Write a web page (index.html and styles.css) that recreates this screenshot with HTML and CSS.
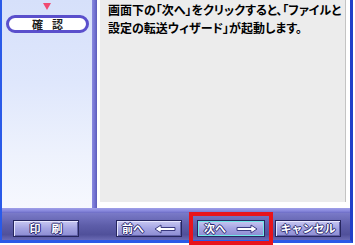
FILE: index.html
```html
<!DOCTYPE html>
<html lang="ja">
<head>
<meta charset="utf-8">
<link rel="stylesheet" href="styles.css">
</head>
<body>
<div class="window">
  <div class="main">
    <div class="sidebar">
      <div class="tri"></div>
      <div class="pill"><span>確</span><span>認</span></div>
    </div>
    <div class="vbar"></div>
    <div class="content-wrap">
      <div class="content">
        <p class="msg">画面下の「次へ」をクリックすると、「ファイルと<br>設定の転送ウィザード」が起動します。</p>
      </div>
    </div>
  </div>
  <div class="hbar"></div>
  <div class="toolbar">
    <div class="btn btn-print"><span class="lbl">印　刷</span></div>
    <div class="btn btn-prev"><span class="lbl">前へ</span>
      <svg class="arrow" width="22" height="10" viewBox="0 0 22 10"><path d="M1 5 L7 1 L7 3.5 L21 3.5 L21 6.5 L7 6.5 L7 9 Z" fill="#fff" stroke="#3a3a80" stroke-width="1"/></svg>
    </div>
    <div class="btn btn-next"><span class="lbl">次へ</span>
      <svg class="arrow" width="22" height="10" viewBox="0 0 22 10"><path d="M21 5 L15 1 L15 3.5 L1 3.5 L1 6.5 L15 6.5 L15 9 Z" fill="#fff" stroke="#3a3a80" stroke-width="1"/></svg>
    </div>
    <div class="btn btn-cancel"><span class="lbl">キャンセル</span></div>
  </div>
  <div class="highlight"></div>
</div>
</body>
</html>
```

FILE: styles.css
```css
html, body {
  margin: 0;
  padding: 0;
  background: #ffffff;
}
body {
  width: 355px;
  height: 245px;
  overflow: hidden;
  font-family: "Noto Sans CJK JP", "Noto Sans", sans-serif;
}
.window {
  position: relative;
  width: 348px;
  height: 240px;
  border-left: 2px solid #2a5ae8;
  border-right: 3px solid #2040c8;
  border-bottom: 3px solid #2a5ae8;
  display: flex;
  flex-direction: column;
  background: #ffffff;
}
.main {
  height: 208px;
  display: flex;
}
.sidebar {
  width: 90px;
  background: linear-gradient(180deg, #d6e0fa 0%, #dfe7fc 40%, #eef2fd 75%, #f6f8fe 100%);
  display: flex;
  flex-direction: column;
  align-items: flex-start;
}
.tri {
  margin: 3px 0 0 41px;
  width: 0;
  height: 0;
  border-left: 4px solid transparent;
  border-right: 4px solid transparent;
  border-top: 7px solid #f04a72;
}
.pill {
  margin: 5px 0 0 4px;
  width: 77px;
  height: 12px;
  border: 3px solid #5a4fcc;
  border-radius: 10px;
  background: #ffffff;
  display: flex;
  justify-content: center;
  align-items: center;
  gap: 9px;
  font-size: 11px;
  font-weight: bold;
  color: #202020;
  line-height: 1;
}
.vbar {
  width: 5px;
  background: linear-gradient(90deg, #8a8ae0 0%, #7070d0 60%, #5a5ab8 100%);
}
.content-wrap {
  flex: 1;
  padding: 0 4px 6px 3px;
  display: flex;
}
.content {
  flex: 1;
  background: #ececec;
  border-right: 1px solid #c4c4c4;
  padding: 1px 0 0 8px;
}
.msg {
  margin: 0;
  font-size: 12px;
  line-height: 18px;
  font-weight: bold;
  color: #000;
  font-feature-settings: "palt";
  white-space: nowrap;
}
.hbar {
  height: 5px;
  background: linear-gradient(180deg, #a0a0e8 0%, #8686dc 60%, #6c6cc4 100%);
}
.toolbar {
  flex: 1;
  background: linear-gradient(180deg, #7a7ac8 0%, #5e5eaa 45%, #50509a 80%, #6a6ab4 100%);
  display: flex;
  align-items: flex-start;
  padding: 7px 0 0 11px;
}
.btn {
  height: 15px;
  border: 1px solid #26265e;
  box-shadow: inset 1px 1px 0 #e6e6ff, inset -1px -1px 0 #6060a8;
  background: linear-gradient(180deg, #c8c8f2 0%, #a4a4e2 50%, #8c8cd2 100%);
  display: flex;
  align-items: center;
  justify-content: center;
  gap: 10px;
  font-size: 11px;
  font-weight: bold;
  color: #ffffff;
  text-shadow: 1px 0 0 #2a2a70, -1px 0 0 #2a2a70, 0 1px 0 #2a2a70, 0 -1px 0 #2a2a70;
  line-height: 1;
}
.btn-print { width: 64px; }
.btn-prev { width: 64px; margin-left: 37px; }
.btn-next {
  width: 66px;
  margin-left: 15px;
  border-color: #26265e;
  box-shadow: inset 0 0 0 1px #70e8e8;
}
.btn-cancel { width: 64px; margin-left: 10px; }
.arrow { display: block; }
.highlight {
  position: absolute;
  left: 187px;
  top: 212px;
  width: 76px;
  height: 25px;
  border: 4px solid #e8141c;
}
```
